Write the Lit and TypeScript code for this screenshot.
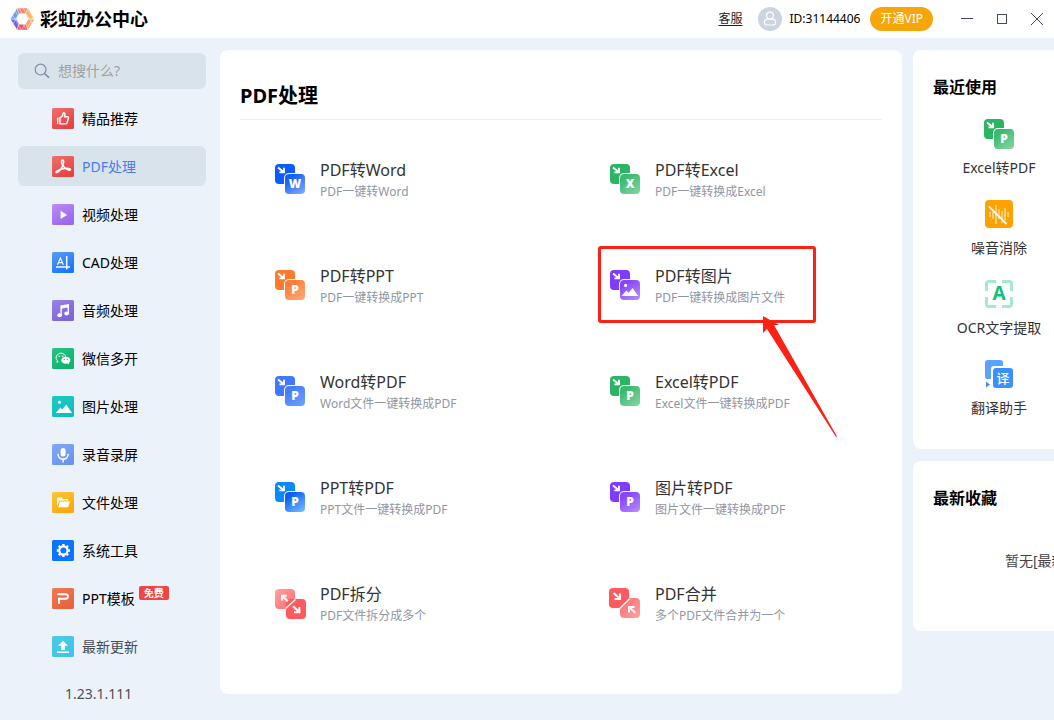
import { LitElement, html, svg, css } from "lit";
import { customElement, property, state } from "lit/decorators.js";
import { classMap } from "lit/directives/class-map.js";

const FONT = css`"Noto Sans", "Noto Sans CJK SC", sans-serif`;

/* ---------- sidebar glyphs, drawn on a 22x21 tile ---------- */
const navGlyphs: Record<string, { from: string; to: string; art: unknown }> = {
  thumb: {
    from: "#f0706c", to: "#e34442",
    art: svg`<g fill="none" stroke="#fff" stroke-width="1.4" stroke-linejoin="round">
      <path d="M8 9.6 L10.4 8 L11.4 4.8 Q13.4 5 12.9 7 L12.5 8.7 H15.6 Q16.7 9 16.3 10.2 L15 15 Q14.7 15.9 13.8 15.9 H8 Z"/>
      <path d="M5.7 9.4 V16"/></g>`,
  },
  pdf: {
    from: "#f0706c", to: "#e34442",
    art: svg`<path fill="none" stroke="#fff" stroke-width="1.5" stroke-linejoin="round" stroke-linecap="round"
      d="M10.6 9.6 C9.2 7 9 4 10.6 4 C12.2 4 11.8 7 10.8 9.6 C9.2 13.4 5.8 17.2 4.2 16.6 C3 15.4 8 13.2 11.5 12.7 C15 12 19 12.3 18.4 13.8 C17.4 15.2 12.6 12.6 10.7 9.2"/>`,
  },
  play: {
    from: "#bd8bf8", to: "#9a68e8",
    art: svg`<path fill="#fff" d="M8.6 6.8 L15 10.9 L8.6 15 Z"/>`,
  },
  cad: {
    from: "#5b9bf5", to: "#1677ff",
    art: svg`<g fill="none" stroke="#fff"><path stroke-width="1.2" d="M5.5 12.8 L8.4 6 L11.3 12.8 M6.6 10.6 H10.2"/>
      <path stroke-width="1.5" d="M14.7 4 V17.5 M4 15 H18"/></g>`,
  },
  music: {
    from: "#9a83ea", to: "#7d62d8",
    art: svg`<g fill="#fff"><ellipse cx="7.6" cy="15.2" rx="2.3" ry="2"/><ellipse cx="14.6" cy="13.6" rx="2.3" ry="2"/>
      <path d="M8.4 5.6 L17 4 V13.6 H15.6 V7.4 L9.8 8.5 V15.2 H8.4 Z"/></g>`,
  },
  wechat: {
    from: "#27c486", to: "#0fb36e",
    art: svg`<path fill="none" stroke="#fff" stroke-width="1" d="M6.4 13.6 L5 14.4 L5.3 12.6 C2.4 9.8 5 5.2 9 5.2 C11.6 5.2 13.2 6.8 13.6 8.8"/>
      <circle cx="7.2" cy="8.2" r=".8" fill="#fff"/><circle cx="10.6" cy="8.2" r=".8" fill="#fff"/>
      <path fill="#fff" d="M13.4 8.8 C19 8.8 19.6 13.6 16.8 15 L17.2 16.4 L15.4 15.6 C11 16.2 9.2 14 9.4 12.2 C9.6 10.2 11.4 8.8 13.4 8.8 Z"/>
      <circle cx="12.2" cy="11.4" r=".6" fill="#12b672"/><circle cx="15.2" cy="11.4" r=".6" fill="#12b672"/>`,
  },
  image: {
    from: "#20c9c4", to: "#0cbfbd",
    art: svg`<circle cx="7.5" cy="6.3" r="1.5" fill="#fff"/><path fill="#fff" d="M3.8 17 L8.4 11.4 L10.4 13.6 L14.2 8.4 L20 17 Z"/>`,
  },
  mic: {
    from: "#82a8fa", to: "#6a94ee",
    art: svg`<rect x="8.6" y="4" width="5" height="8.6" rx="2.5" fill="#fff"/>
      <path fill="none" stroke="#fff" stroke-width="1.5" d="M6 9.8 C6 17 16.2 17 16.2 9.8 M11.1 15 V18.6"/>`,
  },
  folder: {
    from: "#fdc63a", to: "#fba90b",
    art: svg`<path fill="#fff" d="M5 14.6 V6.4 Q5 5.6 5.8 5.6 H9.4 L10.8 7 H15.4 Q16.2 7 16.2 7.8 V8.4 H8.2 Q7.4 8.4 7.1 9.2 Z"/>
      <path fill="#fff" d="M8.2 9.4 H18 L16.4 14.6 Q16.2 15.2 15.6 15.2 H6.2 Z"/>`,
  },
  gear: {
    from: "#0b74ff", to: "#0b74ff",
    art: svg`<circle cx="11.4" cy="10.5" r="4.1" fill="none" stroke="#fff" stroke-width="2.2"/>
      <path stroke="#fff" stroke-width="2.4" d="M16 10.5H18M14.7 13.8L16 15.1M11.4 15.1V17.1M8.1 13.8L6.8 15.1M6.8 10.5H4.8M8.1 7.2L6.8 5.9M11.4 5.9V3.9M14.7 7.2L16 5.9"/>`,
  },
  ppt: {
    from: "#f07a55", to: "#e9633c",
    art: svg`<path fill="none" stroke="#fff" stroke-width="2" d="M5.4 6.3 H13.4 Q16 6.5 16 8.5 Q16 10.6 13.4 10.8 H7 V15.8"/>`,
  },
  update: {
    from: "#4ccbea", to: "#40c4e6",
    art: svg`<path fill="#fff" d="M11 4.8 L16 9.8 H12.8 V14 H9.2 V9.8 H6 Z"/><path stroke="#fff" stroke-width="1.4" d="M5 16.2 H17"/>`,
  },
};

type Nav = { icon: string; label: string; badge?: string; muted?: boolean };
const NAV: Nav[] = [
  { icon: "thumb", label: "精品推荐" },
  { icon: "pdf", label: "PDF处理" },
  { icon: "play", label: "视频处理" },
  { icon: "cad", label: "CAD处理" },
  { icon: "music", label: "音频处理" },
  { icon: "wechat", label: "微信多开" },
  { icon: "image", label: "图片处理" },
  { icon: "mic", label: "录音录屏" },
  { icon: "folder", label: "文件处理" },
  { icon: "gear", label: "系统工具" },
  { icon: "ppt", label: "PPT模板", badge: "免费" },
  { icon: "update", label: "最新更新", muted: true },
];

type Tool = { icon: string; name: string; note: string; marked?: boolean };
const TOOLS: Tool[] = [
  { icon: "word", name: "PDF转Word", note: "PDF一键转Word" },
  { icon: "excel", name: "PDF转Excel", note: "PDF一键转换成Excel" },
  { icon: "ppt", name: "PDF转PPT", note: "PDF一键转换成PPT" },
  { icon: "picture", name: "PDF转图片", note: "PDF一键转换成图片文件", marked: true },
  { icon: "word-pdf", name: "Word转PDF", note: "Word文件一键转换成PDF" },
  { icon: "excel-pdf", name: "Excel转PDF", note: "Excel文件一键转换成PDF" },
  { icon: "ppt-pdf", name: "PPT转PDF", note: "PPT文件一键转换成PDF" },
  { icon: "picture-pdf", name: "图片转PDF", note: "图片文件一键转换成PDF" },
  { icon: "split", name: "PDF拆分", note: "PDF文件拆分成多个" },
  { icon: "merge", name: "PDF合并", note: "多个PDF文件合并为一个" },
];

const RECENT = [
  { icon: "excel-pdf", name: "Excel转PDF" },
  { icon: "noise", name: "噪音消除" },
  { icon: "ocr", name: "OCR文字提取" },
  { icon: "translate", name: "翻译助手" },
];

/* back colour, front gradient start, front gradient end, letter */
const PAIRS: Record<string, [string, string, string, string]> = {
  word: ["#0a5cff", "#1560f8", "#7ba6fb", "W"],
  excel: ["#2bb562", "#3bb96e", "#7ed3a0", "X"],
  ppt: ["#ff7a2e", "#ff7c38", "#ffa577", "P"],
  picture: ["#7d3cff", "#8546fb", "#b287fb", ""],
  "word-pdf": ["#4079ff", "#477dfc", "#6e9dff", "P"],
  "excel-pdf": ["#2bb562", "#3bb96e", "#7ed3a0", "P"],
  "ppt-pdf": ["#0a88ff", "#0a60f2", "#74b6ff", "P"],
  "picture-pdf": ["#7d3cff", "#8546fb", "#b287fb", "P"],
};

@customElement("tool-icon")
export class ToolIcon extends LitElement {
  static styles = css`
    :host { display: block; flex: none; width: 30px; height: 30px; }
    svg { display: block; overflow: visible; }
    .letter { font: 800 12px "Open Sans", "Noto Sans", sans-serif; }
    .ocr { font: 700 19px "Noto Sans", sans-serif; }
    .cjk { font: 500 13px "Noto Sans CJK SC", sans-serif; }
  `;
  @property() name = "";

  private art() {
    const pair = PAIRS[this.name];
    if (pair) {
      const [back, a, b, letter] = pair;
      return svg`
        <defs><linearGradient id="g" x1="0.1" y1="0" x2="0.8" y2="1"><stop offset=".2" stop-color=${a}/><stop offset="1" stop-color=${b}/></linearGradient></defs>
        <rect width="20" height="20" rx="4" fill=${back}/>
        <rect x="9" y="9" width="22" height="22" rx="5" fill="#fff"/>
        <rect x="10" y="10" width="20" height="20" rx="4" fill="url(#g)"/>
        <path d="M3 3.4 L8.6 8 M9 3.8 V8.4 H4.4" fill="none" stroke="#fff" stroke-width="1.9"/>
        ${letter
          ? svg`<text class="letter" x="20" y="24" text-anchor="middle" fill="#fff">${letter}</text>`
          : svg`<circle cx="15.6" cy="15.4" r="1.6" fill="#fff"/><path fill="#fff" d="M11.6 26 L16.4 20.4 L18.6 22.8 L22.6 18 L28.2 26 Z"/>`}`;
    }
    switch (this.name) {
      case "split":
        return svg`
          <defs><linearGradient id="g" x1="0" y1="0" x2="1" y2="1"><stop stop-color="#ffa3a0"/><stop offset="1" stop-color="#ff6a6c"/></linearGradient></defs>
          <rect y="1" width="20" height="20" rx="4" fill="url(#g)"/>
          <rect x="11" y="11" width="20" height="20" rx="4" fill="#ff5a5d"/>
          <path d="M10.6 20.6 L20.4 11.4" stroke="#fff" stroke-width="1.4"/>
          <path d="M7 12.6 V7.8 H11.8 M7.4 8.2 L12.8 13.2 M18 18.2 L24 23.8 M24.4 19 V24.2 H19" fill="none" stroke="#fff" stroke-width="2"/>`;
      case "merge":
        return svg`
          <defs><linearGradient id="g" x1="0" y1="0" x2="1" y2="1"><stop stop-color="#ff6a6c"/><stop offset="1" stop-color="#ffa3a0"/></linearGradient></defs>
          <rect x="-1" width="20" height="20" rx="4" fill="#ff5a5d"/>
          <rect x="10" y="10" width="20" height="20" rx="4" fill="url(#g)"/>
          <path d="M10 10 H19.4 L10 19.8 Z" fill="#ff5a5d"/>
          <path d="M9.6 20.6 L19.8 10.4" stroke="#fff" stroke-width="1.4"/>
          <path d="M3.6 5 L9.6 10.4 M10 5.6 V11 H4.6 M19 24.4 V19 H24.4 M19.4 19.4 L25.6 25" fill="none" stroke="#fff" stroke-width="2"/>`;
      case "noise":
        return svg`
          <rect x="1" y="1" width="28" height="28" rx="4" fill="#ffa200"/>
          <path d="M6 13v5M9 11v9M12 6v19M15 10v10M18 12v12M21 9v12M24 13v5" stroke="#ffdc9a" stroke-width="1.5"/>
          <path d="M4.8 7.4 L22.6 25" stroke="#fff" stroke-width="1.8"/>`;
      case "ocr":
        return svg`
          <path d="M12 2.5 H5 Q2.5 2.5 2.5 5 V12 M18 2.5 H25 Q27.5 2.5 27.5 5 V12 M2.5 18 V25 Q2.5 27.5 5 27.5 H12 M27.5 18 V25 Q27.5 27.5 25 27.5 H18" fill="none" stroke="#a5e8cc" stroke-width="3"/>
          <text class="ocr" x="15" y="21" text-anchor="middle" fill="#14c07a">A</text>`;
      default:
        return svg`
          <path d="M4 1 H16 Q19 1 19 4 V7 H10 Q7 7 7 10 V20 H3 Q1 20 1 17 V4 Q1 1 4 1 Z" fill="#5ba2ff"/>
          <rect x="9" y="9" width="20" height="20" rx="3" fill="#3a90ff"/>
          <text class="cjk" x="19" y="24" text-anchor="middle" fill="#fff">译</text>
          <path d="M2 22.4 L6 25.4 L2 28.4 Z" fill="#3a90ff"/>`;
    }
  }
  render() {
    return html`<svg width="30" height="30" viewBox="0 0 30 30" aria-hidden="true">${this.art()}</svg>`;
  }
}

@customElement("nav-icon")
export class NavIcon extends LitElement {
  static styles = css`
    :host { display: block; flex: none; }
    svg { display: block; }
  `;
  @property() name = "thumb";
  render() {
    const g = navGlyphs[this.name];
    return html`<svg width="22" height="21" viewBox="0 0 22 21" aria-hidden="true">
      <defs><linearGradient id="t" x1="0" y1="0" x2=".6" y2="1"><stop stop-color=${g.from} /><stop offset="1" stop-color=${g.to} /></linearGradient></defs>
      <rect width="22" height="21" rx="1.5" fill="url(#t)" />${g.art}
    </svg>`;
  }
}

@customElement("app-root")
export class AppRoot extends LitElement {
  static styles = css`
    :host {
      display: flex; flex-direction: column; min-height: 100vh; overflow: hidden;
      background: #ebf2fa; color: #000; font-family: ${FONT}; font-size: 14px; line-height: 20px;
    }
    * { box-sizing: border-box; }
    button, input { font: inherit; color: inherit; border: 0; padding: 0; background: none; }
    svg { display: block; }
    h1, h2, p { margin: 0; }

    .top { display: flex; align-items: center; height: 38px; padding: 0 10px; background: #fff; font-size: 12px; }
    .brand { margin: 0 auto 0 5px; font-size: 18px; font-weight: 700; line-height: 24px; }
    .service { color: #222; text-underline-offset: 2px; }
    .avatar { margin: 0 8px 0 15px; }
    .vip { height: 24px; margin: 0 27px 0 10px; padding: 0 10px; border-radius: 12px; background: #f7a60a; color: #fff; }
    .controls { display: flex; gap: 22px; }

    .body { display: flex; align-items: flex-start; gap: 12px; padding: 12px 0 26px 18px; flex: 1; }
    .side { flex: 0 0 188px; min-width: 0; margin-top: 3px; }
    .search { display: flex; align-items: center; gap: 8px; height: 36px; padding: 0 16px; border-radius: 6px; background: #d9e3eb; }
    .search input { flex: 1; min-width: 0; outline: 0; }
    .search input::placeholder { color: #a0a0a0; opacity: 1; }
    .nav { display: flex; flex-direction: column; gap: 8px; margin-top: 9px; }
    .item { display: flex; align-items: center; gap: 8px; height: 40px; padding-left: 34px; border-radius: 6px; text-align: left; }
    .item.active { background: #d9e3eb; color: #4a7cf0; }
    .item.muted { color: #444b55; }
    .label { padding-top: 2px; }
    .badge { align-self: flex-start; margin: 8px 0 0 -4px; padding: 0 5px; border-radius: 2px; background: #f04545; color: #fff; font-size: 10px; font-weight: 700; line-height: 14px; }
    .version { margin: 18px 0 0 47px; color: #4a4f57; }

    .panel { flex: 1; min-width: 0; min-height: 644px; margin-left: 2px; padding: 32px 20px 22px; border-radius: 8px; background: #fff; }
    .panel h1 { padding-bottom: 9px; border-bottom: 1px solid #eeeff1; font-size: 20px; line-height: 28px; }
    .tools { display: grid; grid-template-columns: 1fr 1fr; grid-auto-rows: 106px; column-gap: 54px; margin: 7px 0 0 26px; }
    .tool { position: relative; display: flex; align-items: center; gap: 15px; padding-left: 9px; text-align: left; }
    .tool tool-icon { margin-bottom: 2px; }
    .words { display: block; }
    .name { display: block; color: #333; font-size: 16px; line-height: 24px; }
    .note { display: block; color: #9096a3; font-size: 12px; line-height: 20px; }
    .mark { position: absolute; left: -3px; top: 13px; width: 218px; height: 77px; border: 3px solid #fc2015; border-radius: 3px; }
    .pointer { position: absolute; left: 161px; top: 81px; z-index: 1; }

    .extra { flex: 0 0 141px; min-width: 0; margin-left: -1px; display: flex; flex-direction: column; gap: 12px; overflow: hidden; }
    .card { padding: 26px 0 0 20px; border-radius: 8px 0 0 8px; background: #fff; }
    .card h2 { font-size: 16px; line-height: 22px; }
    .recent { display: flex; flex-direction: column; width: 132px; margin-top: 21px; padding-bottom: 10px; }
    .used { display: flex; flex-direction: column; align-items: center; gap: 9px; height: 80px; color: #333; white-space: nowrap; }
    .saved { min-height: 170px; }
    .empty { margin: 42px 0 0 72px; color: #444; white-space: nowrap; }
  `;

  @state() private current = 1;

  render() {
    return html`
      <header class="top">
        <svg width="25" height="24" viewBox="0 0 25 24" aria-hidden="true">
          <g stroke="#fff" stroke-width=".5">
            <path d="M7 1 H18 L15.6 8 H8.4 Z" fill="#f2876c" /><path d="M18 1 L24.6 12 H17.6 L15 7.6 Z" fill="#f8b35c" />
            <path d="M24.6 12 L18 23 L15 16.4 L17.6 12 Z" fill="#f6a070" /><path d="M18 23 H7 L8.6 16 H15.4 Z" fill="#ee5360" />
            <path d="M7 23 L.4 12 H6.4 L9 16.4 Z" fill="#7560e8" /><path d="M.4 12 L7 1 L9 7.6 L6.4 12 Z" fill="#6f9cee" />
          </g>
          <path d="M9.4 6.6 H15.6 L18.6 12 L15.6 17.4 H9.4 L6.4 12 Z" fill="#fff" />
          <path d="M2 7 L12 24 M5 3.6 L16 22 M9 1 L12.4 7 M13 1 L23 18 M17 1 L24 13 M3 17 L8 8 M12 22 L18 12 M17 21 L23 11" stroke="#fff" stroke-width=".6" opacity=".75" />
        </svg>
        <div class="brand">彩虹办公中心</div>
        <a class="service" href="#service">客服</a>
        <svg class="avatar" width="24" height="24" viewBox="0 0 24 24" aria-hidden="true">
          <circle cx="12" cy="12" r="12" fill="#ccd4e1" />
          <g fill="none" stroke="#fff" stroke-width="1.2"><circle cx="12" cy="8.6" r="3.4" />
            <path d="M9.2 12.2 H14.8 Q17.6 12.8 17.6 15.2 Q17.6 18 14.8 18 H9.2 Q6.4 18 6.4 15.2 Q6.4 12.8 9.2 12.2 Z" /></g>
        </svg>
        <span>ID:31144406</span>
        <button class="vip">开通VIP</button>
        <div class="controls">
          <button aria-label="最小化"><svg width="14" height="14" viewBox="0 0 14 14"><path d="M1 6.5 H13" stroke="#3f4a66" /></svg></button>
          <button aria-label="最大化"><svg width="12" height="14" viewBox="0 0 12 14"><rect x="1.5" y="2.5" width="9" height="9" fill="none" stroke="#3f4a66" /></svg></button>
          <button aria-label="关闭"><svg width="14" height="14" viewBox="0 0 14 14"><path d="M1 1 L13 13 M13 1 L1 13" stroke="#3f4a66" /></svg></button>
        </div>
      </header>
      <div class="body">
        <aside class="side">
          <label class="search">
            <svg width="16" height="16" viewBox="0 0 16 16" aria-hidden="true"><g fill="none" stroke="#7f8ba8" stroke-width="1.2"><circle cx="6.6" cy="6.6" r="5.4" /><path d="M10.5 10.5 L15 14.6" stroke-width="1.6" /></g></svg>
            <input type="text" aria-label="搜索" placeholder="想搜什么?" />
          </label>
          <nav class="nav">
            ${NAV.map((n, i) => html`
              <button class=${classMap({ item: true, active: i === this.current, muted: !!n.muted })} @click=${() => (this.current = i)}>
                <nav-icon name=${n.icon}></nav-icon><span class="label">${n.label}</span>${n.badge ? html`<span class="badge">${n.badge}</span>` : ""}
              </button>`)}
          </nav>
          <p class="version">1.23.1.111</p>
        </aside>
        <main class="panel">
          <h1>PDF处理</h1>
          <div class="tools">
            ${TOOLS.map((t) => html`
              <button class="tool">
                <tool-icon name=${t.icon}></tool-icon>
                <span class="words"><span class="name">${t.name}</span><span class="note">${t.note}</span></span>
                ${t.marked ? html`<span class="mark"></span>
                  <svg class="pointer" width="76" height="124" viewBox="0 0 76 124" aria-hidden="true">
                    <path fill="#fc2015" d="M1 2 L17 11 L12 11 L75 122.5 L74 123 L5 15 L1 19 Z" /></svg>` : ""}
              </button>`)}
          </div>
        </main>
        <aside class="extra">
          <section class="card">
            <h2>最近使用</h2>
            <div class="recent">
              ${RECENT.map((r) => html`<button class="used"><tool-icon name=${r.icon}></tool-icon><span>${r.name}</span></button>`)}
            </div>
          </section>
          <section class="card saved">
            <h2>最新收藏</h2>
            <p class="empty">暂无[最新收藏]</p>
          </section>
        </aside>
      </div>
    `;
  }
}
